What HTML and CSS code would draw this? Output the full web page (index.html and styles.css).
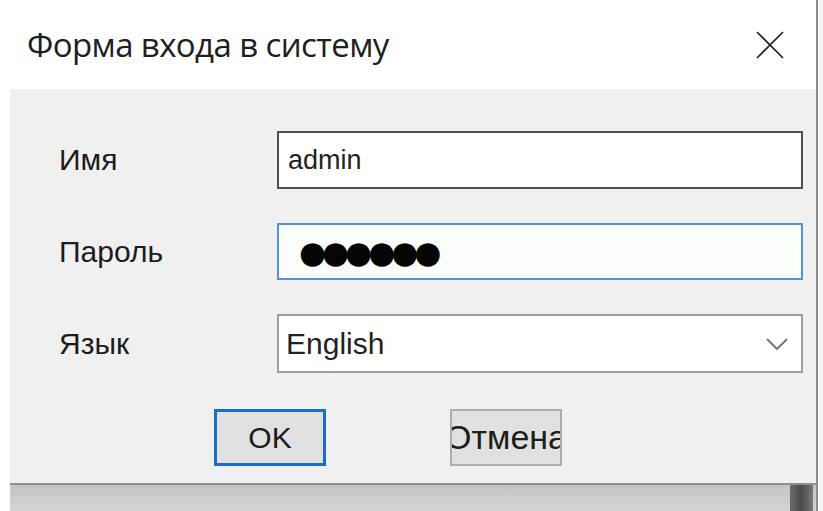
FILE: index.html
```html
<!DOCTYPE html>
<html lang="ru">
<head>
<meta charset="utf-8">
<title>Форма входа в систему</title>
<link rel="stylesheet" href="styles.css">
</head>
<body>
<div class="frame">
  <div class="dialog">
    <header class="titlebar">
      <span class="title">Форма входа в систему</span>
      <span class="close" aria-label="Закрыть">
        <svg width="28" height="28" viewBox="0 0 28 28"><path d="M1 1 L27 27 M27 1 L1 27" stroke="#1e1e1e" stroke-width="1.6" fill="none"/></svg>
      </span>
    </header>
    <div class="client">
      <div class="form">
        <div class="label">Имя</div>
        <div class="field field-name">admin</div>
        <div class="label">Пароль</div>
        <div class="field field-pass"><span class="dots">●●●●●●</span></div>
        <div class="label">Язык</div>
        <div class="field field-select">
          <span>English</span>
          <svg class="chevron" width="24" height="14" viewBox="0 0 24 14"><path d="M2 2 L12 12 L22 2" stroke="#7a7a7a" stroke-width="2.2" fill="none"/></svg>
        </div>
      </div>
      <div class="actions">
        <button class="btn btn-ok">OK</button>
        <button class="btn btn-cancel"><span>Отмена</span></button>
      </div>
    </div>
    <div class="backdrop"><div class="backdrop-bar"></div></div>
  </div>
  <div class="edge"></div>
  <div class="outside"></div>
</div>
</body>
</html>
```
FILE: styles.css
```css
html, body {
  margin: 0;
  padding: 0;
  background: #ffffff;
}

body {
  width: 823px;
  height: 511px;
  overflow: hidden;
  font-family: "Liberation Sans", Arial, sans-serif;
  color: #1a1a1a;
}

.frame {
  display: flex;
  height: 511px;
}

.dialog {
  width: 816px;
  display: flex;
  flex-direction: column;
}

.edge {
  width: 2px;
  background: #8c8c8c;
}

.outside {
  flex: 1;
  background: #f6f6f6;
}

/* window caption */
.titlebar {
  height: 89px;
  flex: none;
  display: flex;
  align-items: center;
  justify-content: space-between;
  padding: 0 32px 0 27px;
  background: #ffffff;
}

.title {
  font-family: "Open Sans", "Noto Sans", sans-serif;
  font-size: 33px;
  color: #202020;
  letter-spacing: -0.6px;
}

.close {
  display: flex;
  width: 28px;
  height: 28px;
}

/* client area */
.client {
  height: 396px;
  flex: none;
  margin-left: 10px;
  background: #f0f0f0;
  border-bottom: 2px solid #8e8e8e;
  box-sizing: border-box;
  padding: 42px 12px 0 49px;
}

.form {
  display: grid;
  grid-template-columns: 218px 526px;
  grid-template-rows: 58px 57px 59px;
  row-gap: 34px;
  align-items: center;
}

.label {
  font-size: 30px;
  color: #1c1c1c;
}

.field {
  height: 100%;
  box-sizing: border-box;
  display: flex;
  align-items: center;
  background: #ffffff;
}

.field-name {
  border: 2px solid #505050;
  padding-left: 9px;
  font-size: 27px;
  color: #222;
}

.field-pass {
  border: 2px solid #4f94d4;
  background: #fcfefb;
  padding-left: 20px;
}

.dots {
  font-family: "DejaVu Sans", sans-serif;
  font-size: 31px;
  letter-spacing: -4px;
  color: #050505;
}

.field-select {
  border: 2px solid #a0a0a0;
  padding: 0 12px 0 7px;
  justify-content: space-between;
  font-size: 30px;
  color: #222;
}

.actions {
  display: flex;
  gap: 124px;
  margin: 36px 0 0 155px;
}

.btn {
  width: 112px;
  height: 57px;
  box-sizing: border-box;
  background: #e1e1e1;
  font-family: "Liberation Sans", Arial, sans-serif;
  font-size: 30px;
  color: #1c1c1c;
  padding: 0;
  display: flex;
  align-items: center;
  justify-content: center;
  overflow: hidden;
}

.btn-ok {
  border: 3px solid #1b6ec8;
}

.btn-cancel {
  border: 2px solid #adadad;
}

/* the caption is wider than the button and gets clipped on both sides */
.btn-cancel span {
  white-space: nowrap;
  font-size: 34px;
}

/* the window behind the dialog */
.backdrop {
  flex: 1;
  margin-left: 10px;
  display: flex;
  justify-content: flex-end;
  background: linear-gradient(#c4c4c4, #d4d4d4);
}

.backdrop-bar {
  width: 23px;
  margin-right: 3px;
  background: linear-gradient(90deg, #6a6a6a, #4a4a4a 50%, #7a7a7a);
}
```
